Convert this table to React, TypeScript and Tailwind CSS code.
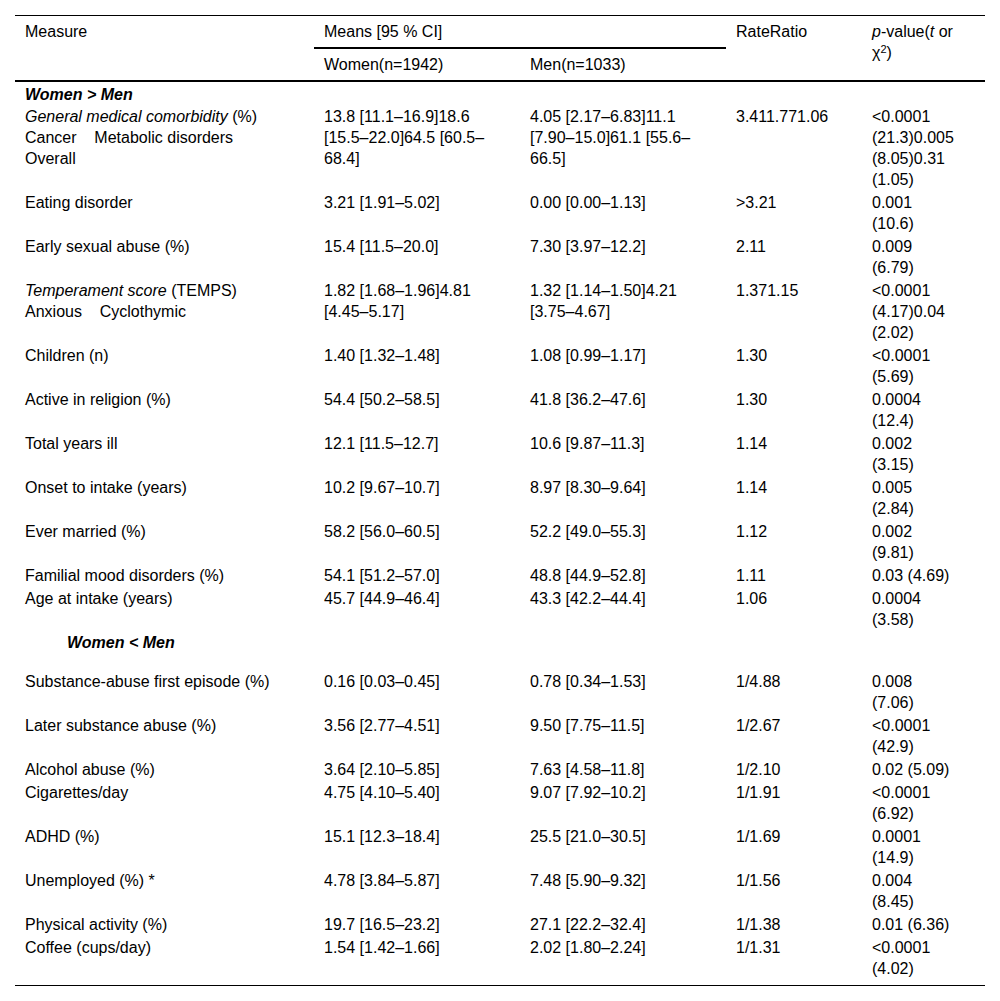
import type { ReactNode } from "react";

type Row = {
  measure: ReactNode[];
  women: string[];
  men: string[];
  ratio: string;
  p: string[];
};

const greater: Row[] = [
  {
    measure: [
      <>
        <i>General medical comorbidity</i> (%)
      </>,
      "Cancer    Metabolic disorders",
      "Overall",
    ],
    women: ["13.8 [11.1–16.9]18.6", "[15.5–22.0]64.5 [60.5–", "68.4]"],
    men: ["4.05 [2.17–6.83]11.1", "[7.90–15.0]61.1 [55.6–", "66.5]"],
    ratio: "3.411.771.06",
    p: ["<0.0001", "(21.3)0.005", "(8.05)0.31", "(1.05)"],
  },
  { measure: ["Eating disorder"], women: ["3.21 [1.91–5.02]"], men: ["0.00 [0.00–1.13]"], ratio: ">3.21", p: ["0.001", "(10.6)"] },
  { measure: ["Early sexual abuse (%)"], women: ["15.4 [11.5–20.0]"], men: ["7.30 [3.97–12.2]"], ratio: "2.11", p: ["0.009", "(6.79)"] },
  {
    measure: [
      <>
        <i>Temperament score</i> (TEMPS)
      </>,
      "Anxious    Cyclothymic",
    ],
    women: ["1.82 [1.68–1.96]4.81", "[4.45–5.17]"],
    men: ["1.32 [1.14–1.50]4.21", "[3.75–4.67]"],
    ratio: "1.371.15",
    p: ["<0.0001", "(4.17)0.04", "(2.02)"],
  },
  { measure: ["Children (n)"], women: ["1.40 [1.32–1.48]"], men: ["1.08 [0.99–1.17]"], ratio: "1.30", p: ["<0.0001", "(5.69)"] },
  { measure: ["Active in religion (%)"], women: ["54.4 [50.2–58.5]"], men: ["41.8 [36.2–47.6]"], ratio: "1.30", p: ["0.0004", "(12.4)"] },
  { measure: ["Total years ill"], women: ["12.1 [11.5–12.7]"], men: ["10.6 [9.87–11.3]"], ratio: "1.14", p: ["0.002", "(3.15)"] },
  { measure: ["Onset to intake (years)"], women: ["10.2 [9.67–10.7]"], men: ["8.97 [8.30–9.64]"], ratio: "1.14", p: ["0.005", "(2.84)"] },
  { measure: ["Ever married (%)"], women: ["58.2 [56.0–60.5]"], men: ["52.2 [49.0–55.3]"], ratio: "1.12", p: ["0.002", "(9.81)"] },
  { measure: ["Familial mood disorders (%)"], women: ["54.1 [51.2–57.0]"], men: ["48.8 [44.9–52.8]"], ratio: "1.11", p: ["0.03 (4.69)"] },
  { measure: ["Age at intake (years)"], women: ["45.7 [44.9–46.4]"], men: ["43.3 [42.2–44.4]"], ratio: "1.06", p: ["0.0004", "(3.58)"] },
];

const fewer: Row[] = [
  { measure: ["Substance-abuse first episode (%)"], women: ["0.16 [0.03–0.45]"], men: ["0.78 [0.34–1.53]"], ratio: "1/4.88", p: ["0.008", "(7.06)"] },
  { measure: ["Later substance abuse (%)"], women: ["3.56 [2.77–4.51]"], men: ["9.50 [7.75–11.5]"], ratio: "1/2.67", p: ["<0.0001", "(42.9)"] },
  { measure: ["Alcohol abuse (%)"], women: ["3.64 [2.10–5.85]"], men: ["7.63 [4.58–11.8]"], ratio: "1/2.10", p: ["0.02 (5.09)"] },
  { measure: ["Cigarettes/day"], women: ["4.75 [4.10–5.40]"], men: ["9.07 [7.92–10.2]"], ratio: "1/1.91", p: ["<0.0001", "(6.92)"] },
  { measure: ["ADHD (%)"], women: ["15.1 [12.3–18.4]"], men: ["25.5 [21.0–30.5]"], ratio: "1/1.69", p: ["0.0001", "(14.9)"] },
  { measure: ["Unemployed (%) *"], women: ["4.78 [3.84–5.87]"], men: ["7.48 [5.90–9.32]"], ratio: "1/1.56", p: ["0.004", "(8.45)"] },
  { measure: ["Physical activity (%)"], women: ["19.7 [16.5–23.2]"], men: ["27.1 [22.2–32.4]"], ratio: "1/1.38", p: ["0.01 (6.36)"] },
  { measure: ["Coffee (cups/day)"], women: ["1.54 [1.42–1.66]"], men: ["2.02 [1.80–2.24]"], ratio: "1/1.31", p: ["<0.0001", "(4.02)"] },
];

function Lines({ items }: { items: ReactNode[] }) {
  return (
    <>
      {items.map((item, i) => (
        <div key={i} className="whitespace-pre">
          {item}
        </div>
      ))}
    </>
  );
}

function DataRow({ row, last }: { row: Row; last?: boolean }) {
  const cell = `align-top pl-[10px] pt-px ${last ? "pb-[6px]" : "pb-px"}`;
  return (
    <tr>
      <td className={cell}>
        <Lines items={row.measure} />
      </td>
      <td className={cell}>
        <Lines items={row.women} />
      </td>
      <td className={cell}>
        <Lines items={row.men} />
      </td>
      <td className={cell}>{row.ratio}</td>
      <td className={cell}>
        <Lines items={row.p} />
      </td>
    </tr>
  );
}

export default function App() {
  const th = "align-top text-left font-normal pl-[10px] py-[5px]";
  return (
    <div
      className="bg-white px-[15px] pt-[15px] pb-4 text-black text-[16px] leading-[21px]"
      style={{ fontFamily: '"Liberation Sans", Arial, sans-serif' }}
    >
      <table className="w-[970px] table-fixed border-collapse border-t border-b border-black">
        <colgroup>
          <col className="w-[299px]" />
          <col className="w-[206px]" />
          <col className="w-[206px]" />
          <col className="w-[136px]" />
          <col className="w-[123px]" />
        </colgroup>
        <thead>
          <tr>
            <th rowSpan={2} className={`${th} border-b-2 border-black`}>
              Measure
            </th>
            <th colSpan={2} className={`${th} border-b-2 border-black`}>
              Means [95 % CI]
            </th>
            <th rowSpan={2} className={`${th} border-b-2 border-black`}>
              RateRatio
            </th>
            <th rowSpan={2} className={`${th} border-b-2 border-black`}>
              <i>p</i>-value(<i>t</i> or
              <br />
              χ<sup className="text-[11px]">2</sup>)
            </th>
          </tr>
          <tr>
            <th className={`${th} border-b-2 border-black`}>Women(n=1942)</th>
            <th className={`${th} border-b-2 border-black`}>Men(n=1033)</th>
          </tr>
        </thead>
        <tbody>
          <tr>
            <td colSpan={5} className="pl-[10px] pt-[2px] pb-0 font-bold italic">
              Women &gt; Men
            </td>
          </tr>
          {greater.map((row, i) => (
            <DataRow key={i} row={row} />
          ))}
          <tr>
            <td colSpan={5} className="pl-[52px] pt-px pb-[17px] font-bold italic">
              Women &lt; Men
            </td>
          </tr>
          {fewer.map((row, i) => (
            <DataRow key={i} row={row} last={i === fewer.length - 1} />
          ))}
        </tbody>
      </table>
    </div>
  );
}
